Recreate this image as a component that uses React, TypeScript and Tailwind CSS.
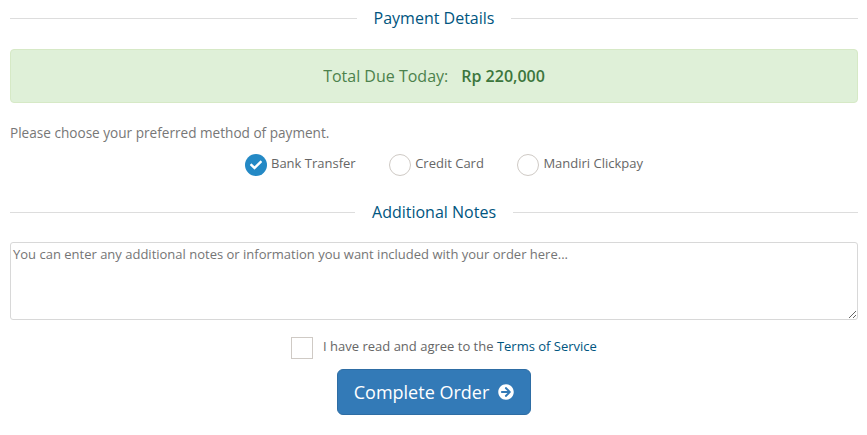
import { FaArrowCircleRight, FaCheck } from 'react-icons/fa';

const Heading = ({ title }: { title: string }) => (
  <div className="flex items-center gap-[17px] h-[20px]">
    <div className="flex-1 h-px bg-[#dddddd]" />
    <div className="text-[16px] leading-[20px] text-[#005580]">{title}</div>
    <div className="flex-1 h-px bg-[#dddddd]" />
  </div>
);

const Radio = ({ label, checked }: { label: string; checked?: boolean }) => (
  <label className="flex items-start">
    {checked ? (
      <span className="w-[22px] h-[22px] rounded-full bg-[#2489c5] flex items-center justify-center text-white">
        <FaCheck className="w-[12px] h-[12px]" />
      </span>
    ) : (
      <span className="w-[22px] h-[22px] rounded-full border border-[#cfcac5] bg-white" />
    )}
    <span className="ml-[4px] text-[13px] leading-[18px] text-[#666666]">{label}</span>
  </label>
);

export default function App() {
  return (
    <div className="w-[867px] h-[435px] bg-white pl-[10px] pr-[9px] pt-[8px] font-['Open_Sans',sans-serif] text-[#666666] overflow-hidden">
      <Heading title="Payment Details" />

      <div className="mt-[21px] h-[54px] rounded-[4px] border border-[#d6e9c6] bg-[#dff0d8] text-[#3c763d] flex items-center justify-center text-[16px]">
        <span className="opacity-90">Total Due Today:</span>
        <strong className="ml-[13px] font-semibold">Rp 220,000</strong>
      </div>

      <p className="mt-[20px] text-[13.6px] leading-[20px] text-[#777777]">Please choose your preferred method of payment.</p>

      <div className="mt-[11px] flex justify-center">
        <div className="flex gap-[33.5px] pl-[20px]">
          <Radio label="Bank Transfer" checked />
          <Radio label="Credit Card" />
          <Radio label="Mandiri Clickpay" />
        </div>
      </div>

      <div className="mt-[26px]">
        <Heading title="Additional Notes" />
      </div>

      <textarea
        rows={4}
        className="block mt-[20px] w-full h-[78px] rounded-[3px] border border-[#d8d8d8] px-[2px] py-[2px] text-[13px] leading-[18px] outline-none placeholder:text-[#757575]"
        placeholder="You can enter any additional notes or information you want included with your order here..."
      />

      <div className="mt-[17px] flex justify-center items-start pl-[20px]">
        <span className="w-[22px] h-[22px] border border-[#cfcac5] bg-white" />
        <span className="ml-[10px] text-[13px] leading-[18px]">
          I have read and agree to the <a className="text-[#005580]">Terms of Service</a>
        </span>
      </div>

      <div className="mt-[10px] flex justify-center">
        <button className="w-[194px] h-[46px] rounded-[6px] border border-[#2e6da4] bg-[#337ab7] text-white text-[18px] flex items-center justify-center">
          Complete Order
          <FaArrowCircleRight className="ml-[9px] w-[16px] h-[16px]" />
        </button>
      </div>
    </div>
  );
}
